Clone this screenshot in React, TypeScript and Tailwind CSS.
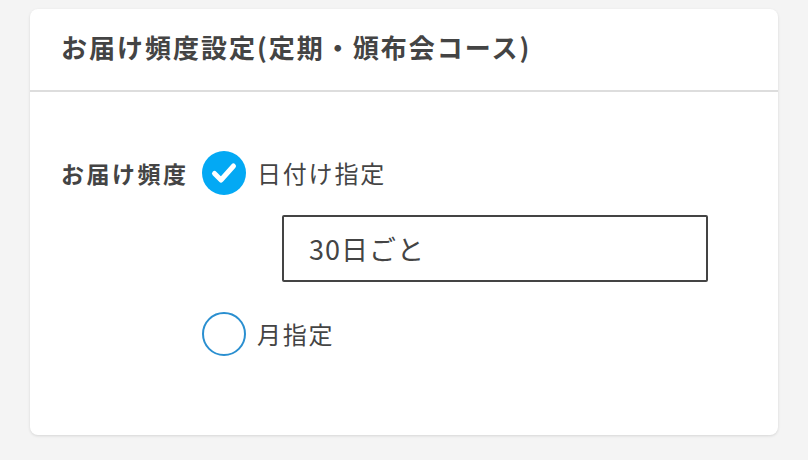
import React from "react";

export default function App() {
  return (
    <div className="w-[808px] h-[460px] bg-[#f4f4f4] pt-[9px] pl-[30px]" style={{ fontFamily: '"Noto Sans CJK JP", "Noto Sans", sans-serif' }}>
      <div className="w-[748px] h-[426px] bg-white rounded-[8px] shadow-[0_1px_3px_rgba(0,0,0,0.12)] flex flex-col">
        <div className="h-[83px] border-b-2 border-[#dddddd] flex items-center pl-[31px] pb-[5px]">
          <h1 className="text-[26px] font-bold text-[#444444] leading-none tracking-[2px]">お届け頻度設定(定期・頒布会コース)</h1>
        </div>
        <div className="flex pl-[31px] pt-[59px]">
          <div className="text-[23px] font-bold text-[#444444] leading-[44px] w-[141px] tracking-[2.5px] whitespace-nowrap">お届け頻度</div>
          <div className="flex flex-col">
            <label className="flex items-center gap-[11px]">
              <span className="w-[44px] h-[44px] rounded-full bg-[#03a9f4] flex items-center justify-center">
                <svg width="30" height="30" viewBox="0 0 30 30">
                  <path d="M5.5 15.5 L12 22 L24.5 8" fill="none" stroke="white" strokeWidth="5" strokeLinecap="round" strokeLinejoin="round" />
                </svg>
              </span>
              <span className="text-[24px] text-[#444444] leading-none tracking-[1.8px]">日付け指定</span>
            </label>
            <div className="ml-[80px] mt-[20px] w-[426px] h-[67px] border-2 border-[#444444] rounded-[2px] flex items-center pl-[25px]">
              <span className="text-[27px] text-[#444444] leading-none tracking-[1px]">30日ごと</span>
            </div>
            <label className="flex items-center gap-[11px] mt-[30px]">
              <span className="w-[44px] h-[44px] rounded-full border-2 border-[#2a8fd0] bg-white" />
              <span className="text-[24px] text-[#444444] leading-none tracking-[1.8px]">月指定</span>
            </label>
          </div>
        </div>
      </div>
    </div>
  );
}
